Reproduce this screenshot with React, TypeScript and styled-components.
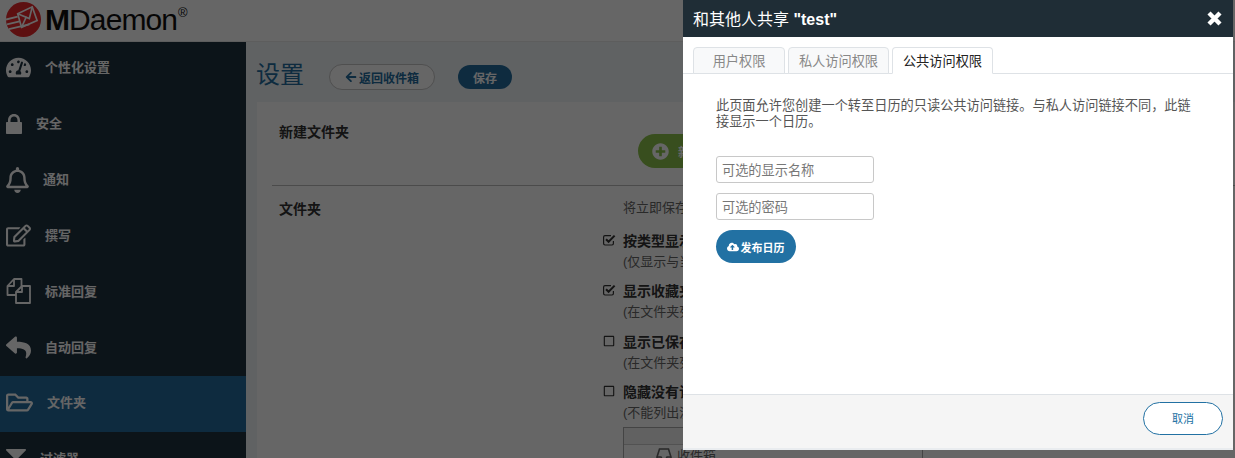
import React from 'react';
import styled, {createGlobalStyle} from 'styled-components';
import {
  FaTachometerAlt,
  FaRegBell,
  FaRegEdit,
  FaReply,
  FaRegFolderOpen,
  FaFilter,
  FaArrowLeft,
  FaPlusCircle,
  FaRegSquare,
  FaCloudUploadAlt,
} from 'react-icons/fa';

const fontStack = '"Liberation Sans", "Noto Sans CJK SC", sans-serif';

const GlobalStyle = createGlobalStyle`
  html, body {
    margin: 0;
    height: 100%;
    overflow: hidden;
    font-family: ${fontStack};
    background: #f0f4f8;
  }
  #root {
    height: 100%;
  }
  * {
    box-sizing: border-box;
  }
`;

const Page = styled.div`
  height: 458px;
  display: flex;
  flex-direction: column;
  overflow: hidden;
`;

const TopBar = styled.header`
  height: 42px;
  flex: none;
  position: relative;
  z-index: 1;
  background: #fff;
  display: flex;
  align-items: center;
  gap: 4px;
  padding: 0 0 2px 6px;
  border-bottom: 1px solid #e8e8e8;
`;

const LogoText = styled.div`
  font-size: 30px;
  line-height: 38px;
  color: #111;
  letter-spacing: -0.9px;
  display: flex;
  align-items: flex-start;
  font-family: "Liberation Sans", sans-serif;
`;

const LogoBold = styled.span`
  font-weight: 700;
`;

const LogoMark = styled.sup`
  font-size: 13px;
  line-height: 1;
  margin: 5px 0 0 1px;
`;

const Body = styled.div`
  flex: 1;
  display: flex;
  min-height: 0;
`;

const Sidebar = styled.nav`
  width: 246px;
  flex: none;
  margin-top: -1px;
  background: #20323f;
`;

const NavItem = styled.div<{$active?: boolean}>`
  height: 55.85px;
  display: flex;
  align-items: center;
  gap: 14px;
  padding-left: 6px;
  padding-bottom: 4px;
  font-size: 13px;
  font-weight: 700;
  color: #fff;
  background: ${props => (props.$active ? '#236d9f' : 'transparent')};
  & svg {
    flex: none;
    display: block;
    margin-top: 2px;
  }
`;

const Main = styled.main`
  flex: 1;
  min-width: 0;
  padding-left: 11px;
  overflow: hidden;
`;

const TitleRow = styled.div`
  height: 60px;
  display: flex;
  align-items: center;
  padding-top: 10px;
`;

const PageTitle = styled.h1`
  margin: 0 25px 10px -1px;
  font-size: 24px;
  font-weight: 400;
  color: #236d9f;
`;

const BackButton = styled.button`
  height: 26px;
  width: 106px;
  margin-right: 23px;
  border: 1px solid #c6c6c6;
  border-radius: 13px;
  background: #fff;
  color: #236d9f;
  font: 700 12px ${fontStack};
  display: flex;
  align-items: center;
  justify-content: center;
  gap: 2px;
  padding: 0;
`;

const SaveButton = styled.button`
  height: 24px;
  width: 54px;
  border: none;
  border-radius: 12px;
  background: #236d9f;
  color: #fff;
  font: 700 12px ${fontStack};
  padding: 0;
`;

const Card = styled.section`
  background: #fff;
  height: 400px;
  padding-left: 15px;
`;

const SectionTop = styled.div`
  height: 84px;
  display: flex;
  border-bottom: 1px solid #bbb;
`;

const SectionLabel = styled.div<{$top: number}>`
  width: 351px;
  flex: none;
  padding: ${props => props.$top}px 0 0 7px;
  font-size: 14px;
  line-height: 16px;
  font-weight: 700;
  color: #333;
`;

const GreenButton = styled.button`
  margin: 32px 0 0 15px;
  height: 34px;
  width: 130px;
  border: none;
  border-radius: 17px;
  background: #8cc34b;
  color: #fff;
  font: 700 12px ${fontStack};
  display: flex;
  align-items: center;
  gap: 9px;
  padding: 0 0 0 14px;
`;

const FolderSection = styled.div`
  display: flex;
  padding-top: 14px;
`;

const Options = styled.div`
  flex: 1;
  font-size: 13px;
  color: #666;
  white-space: nowrap;
`;

const Note = styled.div`
  line-height: 16px;
  margin-bottom: 17px;
`;

const Option = styled.div`
  height: 50.4px;
  position: relative;
`;

const OptionTitle = styled.div`
  font-size: 14px;
  font-weight: 700;
  color: #333;
  line-height: 16px;
`;

const OptionHint = styled.div`
  margin-top: 5px;
  line-height: 16px;
`;

const CheckSlot = styled.span`
  position: absolute;
  left: -20px;
  top: 1px;
  color: #333;
  display: flex;
`;

const FolderTable = styled.div`
  width: 300px;
  margin-top: -8px;
  border: 1px solid #aaa;
  border-bottom: none;
`;

const TableHead = styled.div`
  height: 17px;
  background: #f2f2f2;
  border-bottom: 1px solid #ccc;
`;

const TableRow = styled.div`
  display: flex;
  align-items: center;
  gap: 5px;
  padding-left: 32px;
  height: 20px;
`;

const Backdrop = styled.div`
  position: fixed;
  inset: 0;
  z-index: 2;
  background: rgba(0, 0, 0, 0.6);
`;

const Modal = styled.aside`
  position: fixed;
  z-index: 3;
  top: 0;
  left: 683px;
  width: 550px;
  height: 450px;
  background: #fff;
  display: flex;
  flex-direction: column;
  border-bottom: 2px solid #e9ecef;
`;

const ModalHeader = styled.div`
  height: 37px;
  flex: none;
  background: #1f2d36;
  color: #fff;
  display: flex;
  align-items: center;
  justify-content: space-between;
  padding: 0 11px 0 10px;
  font-size: 16px;
`;

const ModalTitle = styled.div`
  padding-bottom: 2px;
`;

const TitleName = styled.b`
  font-weight: 700;
`;

const TabList = styled.div`
  height: 37px;
  flex: none;
  display: flex;
  align-items: flex-end;
  gap: 3px;
  padding-left: 10px;
  border-bottom: 1px solid #dee2e6;
`;

const Tab = styled.div<{$active?: boolean; $width: number}>`
  width: ${props => props.$width}px;
  height: 27px;
  margin-bottom: -1px;
  border: 1px solid #dee2e6;
  border-bottom-color: ${props => (props.$active ? '#fff' : '#dee2e6')};
  border-radius: 4px 4px 0 0;
  background: ${props => (props.$active ? '#fff' : '#f8f9fa')};
  color: ${props => (props.$active ? '#222' : '#888')};
  font-size: 13.2px;
  display: flex;
  align-items: center;
  justify-content: center;
`;

const ModalContent = styled.div`
  flex: 1;
  padding: 24px 30px 0 33px;
`;

const Intro = styled.p`
  margin: 0 0 26px;
  font-size: 13.2px;
  line-height: 16px;
  color: #555;
`;

const TextField = styled.input`
  display: block;
  width: 158px;
  height: 27px;
  margin-bottom: 10px;
  padding: 1px 5px 0;
  border: 1px solid #c8c8c8;
  border-radius: 3px;
  font: 13.2px ${fontStack};
  outline: none;
  &::placeholder {
    color: #777;
    opacity: 1;
  }
`;

const PublishButton = styled.button`
  width: 80px;
  height: 33px;
  border: none;
  border-radius: 17px;
  background: #2271a3;
  color: #fff;
  font: 700 11px ${fontStack};
  display: flex;
  align-items: center;
  justify-content: center;
  gap: 2px;
  padding: 0 1px 0 0;
`;

const ModalFooter = styled.div`
  height: 54px;
  flex: none;
  background: #f5f5f5;
  border-top: 1px solid #dee2e6;
  display: flex;
  align-items: center;
  justify-content: flex-end;
  padding: 0 10px 7px 0;
`;

const CancelButton = styled.button`
  width: 80px;
  height: 33px;
  border: 1.5px solid #2271a3;
  border-radius: 17px;
  background: #fff;
  color: #2271a3;
  font: 11px ${fontStack};
  padding: 0;
`;

const MailLogo = () => (
  <svg width="35" height="35" viewBox="0 0 36 36">
    <circle cx="18" cy="18" r="18" fill="#e8282c" />
    <g fill="none" stroke="#fff" strokeWidth="1.7">
      <path d="M12 12 L27 5 L32 19 L16 26 Z" />
      <path d="M12 12 L24 17 L27 5" />
      <path d="M16 26 L21 15" />
    </g>
    <g stroke="#fff" strokeWidth="1.9">
      <path d="M0 18 L12 15" />
      <path d="M1 23 L14 20" />
      <path d="M3 28 L24 23" />
    </g>
  </svg>
);

const LockIcon = () => (
  <svg width="16" height="20" viewBox="0 0 16 20">
    <path
      fill="#fff"
      d="M2 8 V6.5 C2 2.5 4.5 0 8 0 C11.5 0 14 2.5 14 6.5 V8 H15 C15.6 8 16 8.4 16 9 V19 C16 19.6 15.6 20 15 20 H1 C.4 20 0 19.6 0 19 V9 C0 8.4 .4 8 1 8 Z M4.5 8 H11.5 V6.5 C11.5 4 10 2.5 8 2.5 C6 2.5 4.5 4 4.5 6.5 Z"
    />
  </svg>
);

// FA4 "files-o" has a folded corner on both sheets, not in the FA5 set
const FilesIcon = () => (
  <svg width="25" height="26" viewBox="0 0 25 26" fill="none" stroke="#fff" strokeWidth="1.8" strokeLinejoin="round">
    <path d="M10 17 H1.5 V8 L8 1 H15.5 V8" />
    <path d="M8 1 V8 H1.5" />
    <path d="M10 25 V14 L16 8 H24 V25 Z" />
    <path d="M16 8 V14 H10" />
  </svg>
);

const CloseIcon = () => (
  <svg width="15" height="15" viewBox="0 0 15 15" stroke="#fff" strokeWidth="4.4">
    <path d="M2 2 L13 13 M13 2 L2 13" />
  </svg>
);

// FA4 "check-square-o": the tick runs out past the box
const CheckedIcon = () => (
  <svg width="13" height="12" viewBox="0 0 13 12" fill="none" stroke="#333">
    <path strokeWidth="1.2" d="M10.4 7 V9.6 C10.4 10.5 9.9 11 9 11 H2 C1.1 11 .6 10.5 .6 9.6 V3 C.6 2.1 1.1 1.6 2 1.6 H8" />
    <path strokeWidth="2" d="M3 5.2 L5.6 7.8 L11.6 1.6" />
  </svg>
);

// mailbox dome, only its top shows above the fold
const InboxIcon = () => (
  <svg width="16" height="16" viewBox="0 0 16 16" fill="none" stroke="#666" strokeWidth="1.6">
    <path d="M1 10 L3.5 2 H12.5 L15 10 V15 H1 Z" />
    <path d="M1 10 H5 L6 12 H10 L11 10 H15" />
  </svg>
);

const navItems: {label: string; icon: React.ReactNode}[] = [
  {label: '个性化设置', icon: <FaTachometerAlt size={25} color="#fff" />},
  {label: '安全', icon: <LockIcon />},
  {label: '通知', icon: <FaRegBell size={26} color="#fff" style={{width: 23}} />},
  {label: '撰写', icon: <FaRegEdit size={25} color="#fff" />},
  {label: '标准回复', icon: <FilesIcon />},
  {label: '自动回复', icon: <FaReply size={25} color="#fff" />},
  {label: '文件夹', icon: <FaRegFolderOpen size={27} color="#fff" />},
  {label: '过滤器', icon: <FaFilter size={20} color="#fff" />},
];

const options = [
  {title: '按类型显示文件夹', hint: '(仅显示与当前视图相关的文件夹)', checked: true},
  {title: '显示收藏夹', hint: '(在文件夹列表顶部显示收藏夹)', checked: true},
  {title: '显示已保存的搜索', hint: '(在文件夹列表中显示已保存的搜索)', checked: false},
  {title: '隐藏没有订阅的文件夹', hint: '(不能列出没有订阅的文件夹)', checked: false},
];

const App = () => {
  return (
    <>
      <GlobalStyle />
      <Page>
        <TopBar>
          <MailLogo />
          <LogoText>
            <LogoBold>M</LogoBold>Daemon<LogoMark>®</LogoMark>
          </LogoText>
        </TopBar>
        <Body>
          <Sidebar>
            {navItems.map(item => (
              <NavItem key={item.label} $active={item.label === '文件夹'}>
                {item.icon}
                {item.label}
              </NavItem>
            ))}
          </Sidebar>
          <Main>
            <TitleRow>
              <PageTitle>设置</PageTitle>
              <BackButton>
                <FaArrowLeft size={12} />
                返回收件箱
              </BackButton>
              <SaveButton>保存</SaveButton>
            </TitleRow>
            <Card>
              <SectionTop>
                <SectionLabel $top={22}>新建文件夹</SectionLabel>
                <GreenButton>
                  <FaPlusCircle size={17} />
                  新建文件夹
                </GreenButton>
              </SectionTop>
              <FolderSection>
                <SectionLabel $top={1}>文件夹</SectionLabel>
                <Options>
                  <Note>将立即保存对文件夹的更改</Note>
                  {options.map(option => (
                    <Option key={option.title}>
                      <CheckSlot>
                        {option.checked ? <CheckedIcon /> : <FaRegSquare size={12} />}
                      </CheckSlot>
                      <OptionTitle>{option.title}</OptionTitle>
                      <OptionHint>{option.hint}</OptionHint>
                    </Option>
                  ))}
                  <FolderTable>
                    <TableHead />
                    <TableRow>
                      <InboxIcon />
                      收件箱
                    </TableRow>
                  </FolderTable>
                </Options>
              </FolderSection>
            </Card>
          </Main>
        </Body>
      </Page>
      <Backdrop />
      <Modal>
        <ModalHeader>
          <ModalTitle>
            和其他人共享 <TitleName>"test"</TitleName>
          </ModalTitle>
          <CloseIcon />
        </ModalHeader>
        <TabList>
          <Tab $width={92}>用户权限</Tab>
          <Tab $width={101}>私人访问权限</Tab>
          <Tab $width={101} $active>
            公共访问权限
          </Tab>
        </TabList>
        <ModalContent>
          <Intro>
            此页面允许您创建一个转至日历的只读公共访问链接。与私人访问链接不同，此链接显示一个日历。
          </Intro>
          <TextField placeholder="可选的显示名称" />
          <TextField placeholder="可选的密码" />
          <PublishButton>
            <FaCloudUploadAlt size={12} />
            发布日历
          </PublishButton>
        </ModalContent>
        <ModalFooter>
          <CancelButton>取消</CancelButton>
        </ModalFooter>
      </Modal>
    </>
  );
};

export default App;
